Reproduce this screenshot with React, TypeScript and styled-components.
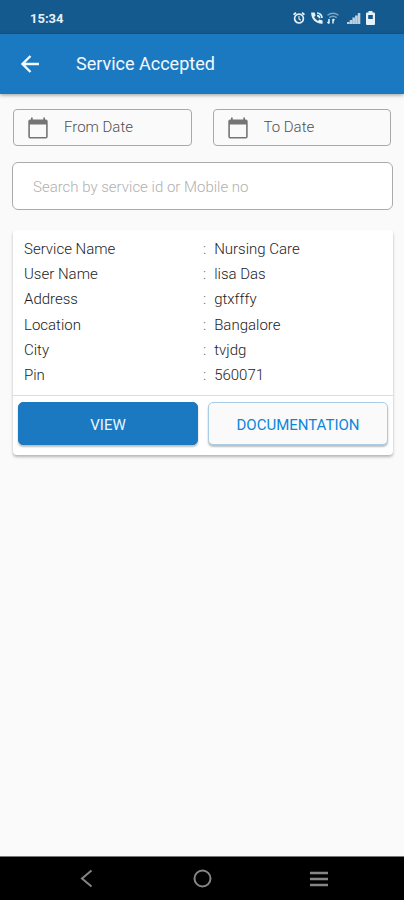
import React from "react";
import styled, { createGlobalStyle } from "styled-components";

const GlobalStyle = createGlobalStyle`
  * { box-sizing: border-box; }
  body { margin: 0; background: #fafafa; }
  body, button, input { font-family: Roboto, "Liberation Sans", sans-serif; }
`;

const Screen = styled.div`
  min-height: 100vh;
  display: flex;
  flex-direction: column;
  background: #fafafa;
`;

const StatusBar = styled.div`
  height: 34px;
  padding: 2px 28px 0 30px;
  display: flex;
  align-items: center;
  justify-content: space-between;
  background: #145a8e;
  color: #e6f1f8;
  font-size: 13px;
  font-weight: 700;
`;

const StatusIcons = styled.div`
  display: flex;
  align-items: center;
  gap: 4px;
  svg { display: block; }
`;

const NetworkGroup = styled.div`
  display: flex;
  gap: 2px;
`;

const SignalGroup = styled.div`
  display: flex;
  align-items: center;
  gap: 4px;
  margin-left: 2px;
`;

const AppBar = styled.header`
  height: 60px;
  padding: 0 20px;
  display: flex;
  align-items: center;
  gap: 36px;
  background: #1a79c1;
  color: #f2f9ff;
  box-shadow: 0 1px 4px rgba(0, 0, 0, 0.4);
`;

const IconButton = styled.button`
  padding: 0;
  border: 0;
  background: none;
  color: inherit;
  cursor: pointer;
  svg { display: block; }
`;

const Title = styled.h1`
  margin: 0;
  font-size: 18px;
  font-weight: 400;
  line-height: 24px;
`;

const Content = styled.main`
  flex: 1;
  padding: 15px 11px 0 12px;
`;

const DateRow = styled.div`
  display: grid;
  grid-template-columns: 1fr 1fr;
  gap: 21px;
  padding: 0 2px 0 1px;
`;

const DateField = styled.label`
  height: 37px;
  padding: 0 12px;
  display: flex;
  align-items: center;
  gap: 14px;
  border: 1px solid #a9a9a9;
  border-radius: 4px;
  color: #666;
  svg { flex: none; }
`;

const DateInput = styled.input`
  width: 100%;
  min-width: 0;
  padding: 0 0 2px;
  border: 0;
  outline: 0;
  background: none;
  color: #5c5c5c;
  font-size: 15px;
  font-weight: 300;
  &::placeholder { color: #505050; opacity: 1; }
`;

const SearchInput = styled.input`
  display: block;
  width: 100%;
  height: 48px;
  margin-top: 16px;
  padding: 2px 20px 0;
  border: 1px solid #ababab;
  border-radius: 6px;
  background: #fff;
  color: #444;
  font-size: 15px;
  font-weight: 300;
  &::placeholder { color: #b0b0b0; opacity: 1; }
`;

const Card = styled.article`
  margin: 20px 0 0 1px;
  border-radius: 4px;
  background: #fff;
  box-shadow: 0 2px 3px rgba(0, 0, 0, 0.28);
`;

const Details = styled.dl`
  margin: 0;
  padding: 6px 11px 7px;
  display: grid;
  grid-auto-rows: 1fr;
  min-height: 165px;
`;

const Detail = styled.div`
  display: grid;
  grid-template-columns: 1fr 1fr;
  align-items: center;
  color: #1c1c1c;
  font-size: 15px;
  font-weight: 300;
`;

const Term = styled.dt``;

const Value = styled.dd`
  margin: 0;
  display: flex;
  gap: 8px;
  &::before { content: ":"; color: #666; }
`;

const Actions = styled.div`
  padding: 6px 5px 10px;
  display: grid;
  grid-template-columns: 1fr 1fr;
  gap: 10px;
  border-top: 1px solid #ddd;
`;

const ActionButton = styled.button<{ $primary?: boolean }>`
  height: 43px;
  padding: 2px 0 0;
  border: 1px solid ${(p) => (p.$primary ? "#1a79c1" : "#a9cde6")};
  border-radius: 5px;
  background: ${(p) => (p.$primary ? "#1a79c1" : "#fafafa")};
  color: ${(p) => (p.$primary ? "#eaf6ff" : "#0b86de")};
  font-size: 15px;
  font-weight: 400;
  cursor: pointer;
  box-shadow: 0 2px 2px rgba(0, 0, 0, 0.26);
`;

const NavBar = styled.nav`
  height: 44px;
  padding: 0 27px 0 29px;
  display: grid;
  grid-template-columns: repeat(3, 1fr);
  align-items: center;
  justify-items: center;
  border-top: 1px solid #777;
  background: #000;
  color: #858585;
`;

const AlarmIcon = () => (
  <svg width="14" height="14" viewBox="0 0 14 14" fill="none" stroke="currentColor" aria-hidden="true">
    <circle cx="7" cy="7.6" r="4.4" strokeWidth="1.7" />
    <path d="M1.6 3.8 4 1.8M12.4 3.8 10 1.8" strokeWidth="1.8" />
    <path d="M7 5v3l1.8 1.2" strokeWidth="1.1" />
  </svg>
);

const CallIcon = () => (
  <svg width="14" height="14" viewBox="0 0 14 14" aria-hidden="true">
    <path
      d="M1.2 1.6h3.400l1 3-1.500 1.500a8 8 0 0 0 3.800 3.800l1.500-1.500 3.200 1v3.400C6 13.200.8 8 1.200 1.600Z"
      fill="currentColor"
    />
    <path d="M7 2a5 5 0 0 1 5 5M7 4.600a2.600 2.600 0 0 1 2.600 2.600" fill="none" stroke="currentColor" strokeWidth="1.700" />
  </svg>
);

const WifiIcon = () => (
  <svg width="14" height="14" viewBox="0 0 14 14" fill="none" stroke="currentColor" aria-hidden="true">
    <path d="M1.500 4.200q5.500-4 11 0M3.300 6.600q3.700-2.800 7.400 0" strokeWidth="1.400" opacity=".5" />
    <path d="M3 8v4.500M1.500 11 3 12.600M7 8v4.500M8.400 9.400 7 8" strokeWidth="1.500" />
  </svg>
);

const SignalIcon = () => (
  <svg width="15" height="14" viewBox="0 0 15 14" fill="currentColor" opacity=".8" aria-hidden="true">
    <path d="M1 11h2.500v2H1zM3.700 9h2.500v4H3.700zM6.400 6.500h2.500V13H6.400zM9.100 4.500h2.500V13H9.100zM11.800 2h2.500v11h-2.500z" />
  </svg>
);

const BatteryIcon = () => (
  <svg width="11" height="16" viewBox="0 0 11 16" aria-hidden="true">
    <path
      d="M3.500 1h4v1.500H9q1 0 1 1V14q0 1-1 1H2q-1 0-1-1V3.500q0-1 1-1h1.500ZM3.200 5v4h4.600V5Z"
      fill="currentColor"
      fillRule="evenodd"
    />
  </svg>
);

const BackArrowIcon = () => (
  <svg width="20" height="20" viewBox="0 0 20 20" fill="none" stroke="currentColor" strokeWidth="2.400" aria-hidden="true">
    <path d="M19 10H3M10.500 2 2.500 10l8 8" />
  </svg>
);

const CalendarIcon = () => (
  <svg width="24" height="24" viewBox="0 0 24 24" fill="currentColor" aria-hidden="true">
    <path
      d="M5 1.500h1.700v2h10.600v-2H19v2h1q1.700 0 1.700 2V20.500q0 2-1.700 2H4q-1.700 0-1.700-2V5.500q0-2 1.700-2h1ZM3.900 8.400v12.700h16.200V8.400Z"
      fillRule="evenodd"
      opacity=".9"
    />
  </svg>
);

const NavBackIcon = () => (
  <svg width="20" height="20" viewBox="0 0 20 20" fill="none" stroke="currentColor" strokeWidth="2" aria-hidden="true">
    <path d="M14.500 1.500 5 9.500 14.500 17.500" />
  </svg>
);

const NavHomeIcon = () => (
  <svg width="20" height="20" viewBox="0 0 20 20" fill="none" stroke="currentColor" strokeWidth="2" aria-hidden="true">
    <circle cx="9.500" cy="9.500" r="8" />
  </svg>
);

const NavMenuIcon = () => (
  <svg width="20" height="20" viewBox="0 0 20 20" fill="none" stroke="currentColor" strokeWidth="2.600" aria-hidden="true">
    <path d="M1 4h18M1 10h18M1 16h18" />
  </svg>
);

const details = [
  ["Service Name", "Nursing Care"],
  ["User Name", "lisa Das"],
  ["Address", "gtxfffy"],
  ["Location", "Bangalore"],
  ["City", "tvjdg"],
  ["Pin", "560071"],
];

export default function App() {
  return (
    <Screen>
      <GlobalStyle />
      <StatusBar>
        <span>15:34</span>
        <StatusIcons>
          <AlarmIcon />
          <NetworkGroup>
            <CallIcon />
            <WifiIcon />
          </NetworkGroup>
          <SignalGroup>
            <SignalIcon />
            <BatteryIcon />
          </SignalGroup>
        </StatusIcons>
      </StatusBar>
      <AppBar>
        <IconButton aria-label="Back"><BackArrowIcon /></IconButton>
        <Title>Service Accepted</Title>
      </AppBar>
      <Content>
        <DateRow>
          {["From Date", "To Date"].map((name) => (
            <DateField key={name}>
              <CalendarIcon />
              <DateInput type="text" placeholder={name} aria-label={name} />
            </DateField>
          ))}
        </DateRow>
        <SearchInput
          type="text"
          placeholder="Search by service id or Mobile no"
          aria-label="Search by service id or Mobile no"
        />
        <Card>
          <Details>
            {details.map(([term, value]) => (
              <Detail key={term}>
                <Term>{term}</Term>
                <Value>{value}</Value>
              </Detail>
            ))}
          </Details>
          <Actions>
            <ActionButton $primary>VIEW</ActionButton>
            <ActionButton>DOCUMENTATION</ActionButton>
          </Actions>
        </Card>
      </Content>
      <NavBar>
        <IconButton aria-label="System back"><NavBackIcon /></IconButton>
        <IconButton aria-label="Home"><NavHomeIcon /></IconButton>
        <IconButton aria-label="Recent apps"><NavMenuIcon /></IconButton>
      </NavBar>
    </Screen>
  );
}
